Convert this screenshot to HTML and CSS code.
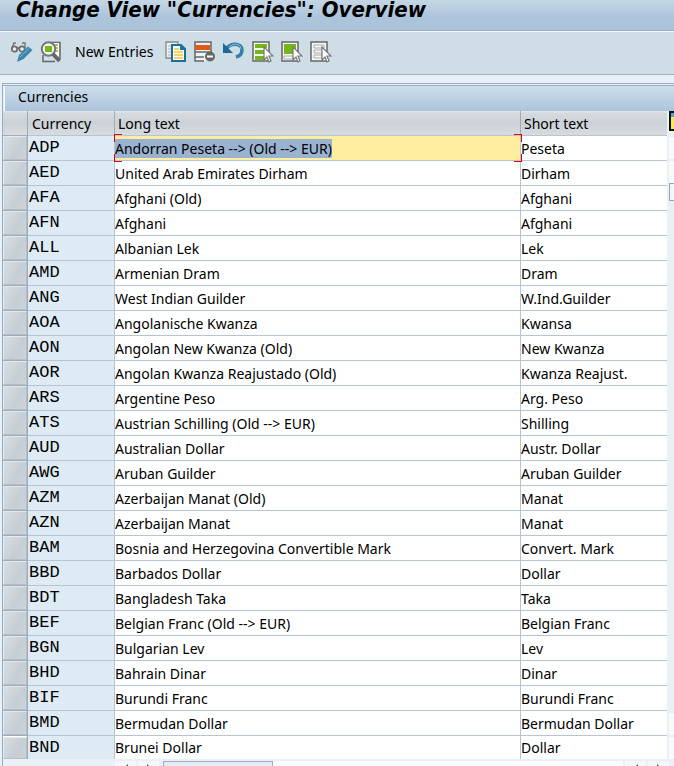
FILE: index.html
```html
<!DOCTYPE html>
<html lang="en">
	<head>
		<meta charset="utf-8">
		<title>Change View "Currencies": Overview</title>
		<link rel="stylesheet" href="styles.css">
	</head>
	<body>
		<header class="titlebar">
			<h1>Change View "Currencies": Overview</h1>
		</header>
		<nav class="toolbar">
			<button type="button" aria-label="Display / Change">
				<svg width="22" height="22" viewBox="0 0 22 22" fill="none">
					<path d="M1 7l2-5h2M14 7V2h-3" stroke="#777" stroke-width="1.4"/>
					<circle cx="3.500" cy="8" r="2.700" fill="#e6edf2" stroke="#6b6b6b" stroke-width="1.700"/>
					<circle cx="11" cy="8" r="2.700" fill="#e6edf2" stroke="#6b6b6b" stroke-width="1.700"/>
					<path d="M6 7h3" stroke="#6b6b6b" stroke-width="1.700"/>
					<path d="M6 21l2-7 9-8.500 4.500 3.500-9 9z" fill="#3a85ae"/>
					<path d="M9 16l9-8.500" stroke="#7fb5d3"/>
				</svg>
			</button>
			<button type="button" aria-label="Details">
				<svg width="22" height="22" viewBox="0 0 22 22" fill="none">
					<path d="M10 1.500h10V18M3 14v6.500h12" stroke="#666" stroke-width="1.500"/>
					<path d="M13 2h6v13h-6z" fill="#fff"/>
					<path d="M14 4h4M14 7h4M14 10h4" stroke="#75b71b" stroke-width="1.500"/>
					<circle cx="8.500" cy="8" r="6.700" fill="#f4f8f6" stroke="#777" stroke-width="2"/>
					<path d="M5 5h7v6H5z" fill="#75b71b"/>
					<path d="M13 13l6.500 7" stroke="#666" stroke-width="4"/>
				</svg>
			</button>
			<button type="button" class="new-entries">New Entries</button>
			<button type="button" aria-label="Copy As...">
				<svg width="22" height="22" viewBox="0 0 22 22" fill="none">
					<path d="M6 17H1V1h12v3" fill="#eef2f4" stroke="#888" stroke-width="1.300"/>
					<path d="M3 5h4M3 8h4M3 11h4M3 14h4" stroke="#aaa"/>
					<path d="M7 4h9l4 4v12H7z" fill="#fff" stroke="#1870a0" stroke-width="2"/>
					<path d="M15 4v5h5z" fill="#1870a0"/>
					<path d="M9 8h5M9 11h9M9 14h9M9 17h9" stroke="#f5c32c" stroke-width="1.500"/>
				</svg>
			</button>
			<button type="button" aria-label="Delete">
				<svg width="22" height="22" viewBox="0 0 22 22" fill="none">
					<path d="M1 1h16v19H1z" fill="#eff3f5"/>
					<path d="M17 13V1H1v19h9M1 11h16M1 16h9" stroke="#666" stroke-width="1.500"/>
					<path d="M1 4h15v5H1z" fill="#df5a16"/>
					<circle cx="16" cy="15.500" r="5" fill="#666"/>
					<path d="M13 15.500h6" stroke="#fff" stroke-width="2"/>
				</svg>
			</button>
			<button type="button" aria-label="Undo Change">
				<svg width="22" height="22" viewBox="0 0 22 22" fill="none">
					<path d="M3 8c5-7 16-6 16 1 0 4-2 6-6 7" stroke="#347fa9" stroke-width="3.500"/>
					<path d="M6 6c4-4 12-4 12 2" stroke="#8dbad3"/>
					<path d="M0 2v10h10l-3-3-4-4z" fill="#1d6995"/>
				</svg>
			</button>
			<button type="button" aria-label="Select All">
				<svg width="22" height="22" viewBox="0 0 22 22" fill="none">
					<path d="M1 1h16v19H1z" fill="#f5f8f8" stroke="#666" stroke-width="1.500"/>
					<path d="M3 3h12v4H3zM3 9h10v4H3zM3 15h9v4H3z" fill="#75b71b"/>
					<path d="M12 6v13l3-3 2 5 2-1-2-5h4z" fill="#fff" stroke="#777" stroke-width="1.200"/>
				</svg>
			</button>
			<button type="button" aria-label="Select Block">
				<svg width="22" height="22" viewBox="0 0 22 22" fill="none">
					<path d="M1 1h16v19H1z" fill="#f5f8f8" stroke="#666" stroke-width="1.500"/>
					<path d="M3 3h12v10H3z" fill="#75b71b"/>
					<path d="M3 15h9v3H3z" stroke="#aaa"/>
					<path d="M12 6v13l3-3 2 5 2-1-2-5h4z" fill="#fff" stroke="#777" stroke-width="1.200"/>
				</svg>
			</button>
			<button type="button" aria-label="Deselect All">
				<svg width="22" height="22" viewBox="0 0 22 22" fill="none">
					<path d="M1 1h16v19H1z" fill="#f5f8f8" stroke="#666" stroke-width="1.500"/>
					<path d="M4 4h10v3H4zM4 9h8v3H4zM4 14h8v3H4z" stroke="#aaa"/>
					<path d="M12 6v13l3-3 2 5 2-1-2-5h4z" fill="#fff" stroke="#777" stroke-width="1.200"/>
				</svg>
			</button>
		</nav>
		<main class="panel">
			<h2>Currencies</h2>
			<div class="grid">
				<table>
					<thead>
						<tr><th class="sel"></th><th class="code">Currency</th><th id="long">Long text</th><th class="short" id="short">Short text</th></tr>
					</thead>
					<tbody>
						<tr><td><button type="button" aria-label="Select ADP"></button></td><td>ADP</td><td class="active"><input aria-labelledby="long" value="Andorran Peseta --&gt; (Old --&gt; EUR)"></td><td><input aria-labelledby="short" value="Peseta"></td></tr>
						<tr><td><button type="button" aria-label="Select AED"></button></td><td>AED</td><td><input aria-labelledby="long" value="United Arab Emirates Dirham"></td><td><input aria-labelledby="short" value="Dirham"></td></tr>
						<tr><td><button type="button" aria-label="Select AFA"></button></td><td>AFA</td><td><input aria-labelledby="long" value="Afghani (Old)"></td><td><input aria-labelledby="short" value="Afghani"></td></tr>
						<tr><td><button type="button" aria-label="Select AFN"></button></td><td>AFN</td><td><input aria-labelledby="long" value="Afghani"></td><td><input aria-labelledby="short" value="Afghani"></td></tr>
						<tr><td><button type="button" aria-label="Select ALL"></button></td><td>ALL</td><td><input aria-labelledby="long" value="Albanian Lek"></td><td><input aria-labelledby="short" value="Lek"></td></tr>
						<tr><td><button type="button" aria-label="Select AMD"></button></td><td>AMD</td><td><input aria-labelledby="long" value="Armenian Dram"></td><td><input aria-labelledby="short" value="Dram"></td></tr>
						<tr><td><button type="button" aria-label="Select ANG"></button></td><td>ANG</td><td><input aria-labelledby="long" value="West Indian Guilder"></td><td><input aria-labelledby="short" value="W.Ind.Guilder"></td></tr>
						<tr><td><button type="button" aria-label="Select AOA"></button></td><td>AOA</td><td><input aria-labelledby="long" value="Angolanische Kwanza"></td><td><input aria-labelledby="short" value="Kwansa"></td></tr>
						<tr><td><button type="button" aria-label="Select AON"></button></td><td>AON</td><td><input aria-labelledby="long" value="Angolan New Kwanza (Old)"></td><td><input aria-labelledby="short" value="New Kwanza"></td></tr>
						<tr><td><button type="button" aria-label="Select AOR"></button></td><td>AOR</td><td><input aria-labelledby="long" value="Angolan Kwanza Reajustado (Old)"></td><td><input aria-labelledby="short" value="Kwanza Reajust."></td></tr>
						<tr><td><button type="button" aria-label="Select ARS"></button></td><td>ARS</td><td><input aria-labelledby="long" value="Argentine Peso"></td><td><input aria-labelledby="short" value="Arg. Peso"></td></tr>
						<tr><td><button type="button" aria-label="Select ATS"></button></td><td>ATS</td><td><input aria-labelledby="long" value="Austrian Schilling (Old --&gt; EUR)"></td><td><input aria-labelledby="short" value="Shilling"></td></tr>
						<tr><td><button type="button" aria-label="Select AUD"></button></td><td>AUD</td><td><input aria-labelledby="long" value="Australian Dollar"></td><td><input aria-labelledby="short" value="Austr. Dollar"></td></tr>
						<tr><td><button type="button" aria-label="Select AWG"></button></td><td>AWG</td><td><input aria-labelledby="long" value="Aruban Guilder"></td><td><input aria-labelledby="short" value="Aruban Guilder"></td></tr>
						<tr><td><button type="button" aria-label="Select AZM"></button></td><td>AZM</td><td><input aria-labelledby="long" value="Azerbaijan Manat (Old)"></td><td><input aria-labelledby="short" value="Manat"></td></tr>
						<tr><td><button type="button" aria-label="Select AZN"></button></td><td>AZN</td><td><input aria-labelledby="long" value="Azerbaijan Manat"></td><td><input aria-labelledby="short" value="Manat"></td></tr>
						<tr><td><button type="button" aria-label="Select BAM"></button></td><td>BAM</td><td><input aria-labelledby="long" value="Bosnia and Herzegovina Convertible Mark"></td><td><input aria-labelledby="short" value="Convert. Mark"></td></tr>
						<tr><td><button type="button" aria-label="Select BBD"></button></td><td>BBD</td><td><input aria-labelledby="long" value="Barbados Dollar"></td><td><input aria-labelledby="short" value="Dollar"></td></tr>
						<tr><td><button type="button" aria-label="Select BDT"></button></td><td>BDT</td><td><input aria-labelledby="long" value="Bangladesh Taka"></td><td><input aria-labelledby="short" value="Taka"></td></tr>
						<tr><td><button type="button" aria-label="Select BEF"></button></td><td>BEF</td><td><input aria-labelledby="long" value="Belgian Franc (Old --&gt; EUR)"></td><td><input aria-labelledby="short" value="Belgian Franc"></td></tr>
						<tr><td><button type="button" aria-label="Select BGN"></button></td><td>BGN</td><td><input aria-labelledby="long" value="Bulgarian Lev"></td><td><input aria-labelledby="short" value="Lev"></td></tr>
						<tr><td><button type="button" aria-label="Select BHD"></button></td><td>BHD</td><td><input aria-labelledby="long" value="Bahrain Dinar"></td><td><input aria-labelledby="short" value="Dinar"></td></tr>
						<tr><td><button type="button" aria-label="Select BIF"></button></td><td>BIF</td><td><input aria-labelledby="long" value="Burundi Franc"></td><td><input aria-labelledby="short" value="Burundi Franc"></td></tr>
						<tr><td><button type="button" aria-label="Select BMD"></button></td><td>BMD</td><td><input aria-labelledby="long" value="Bermudan Dollar"></td><td><input aria-labelledby="short" value="Bermudan Dollar"></td></tr>
						<tr><td><button type="button" aria-label="Select BND"></button></td><td>BND</td><td><input aria-labelledby="long" value="Brunei Dollar"></td><td><input aria-labelledby="short" value="Dollar"></td></tr>
					</tbody>
				</table>
				<div class="vscroll">
					<button type="button" class="config" aria-label="Configuration">
						<svg width="20" height="20" viewBox="0 0 20 20"><path d="M1 1h18v18H1z" fill="#ffe94d" stroke="#111" stroke-width="2"/><path d="M2 2h16v4H2z" fill="#4ca5d4"/></svg>
					</button>
					<button type="button" class="step" aria-label="Up"></button>
					<button type="button" class="step" aria-label="Down"></button>
					<div class="vthumb"></div>
					<button type="button" class="step last" aria-label="Page up"></button>
					<button type="button" class="step" aria-label="Page down"></button>
				</div>
			</div>
			<div class="hscroll">
				<button type="button" class="prev" aria-label="First column"></button>
				<button type="button" class="next" aria-label="Next column"></button>
				<div class="track"><div class="hthumb"></div></div>
				<button type="button" class="prev" aria-label="Left"></button>
				<button type="button" class="next" aria-label="Right"></button>
			</div>
		</main>
		<script>
document.querySelector('.active input').select();
		</script>
	</body>
</html>
```
FILE: styles.css
```css
* {
	box-sizing: border-box;
}
body {
	margin: 0;
	height: 100vh;
	overflow: hidden;
	background: #e9f0f6;
	color: #000;
	font: 14px/20px "Noto Sans", Tahoma, sans-serif;
}
button, input {
	font: inherit;
	color: inherit;
	border: 0;
	padding: 0;
	background: none;
}
.titlebar {
	height: 31px;
	background: linear-gradient(#c5d7e5, #abc3db 60%);
	border-bottom: 1px solid #a0b1c0;
	padding-left: 16px;
}
h1 {
	margin: 0;
	font: italic bold 22px/20px "DejaVu Sans Condensed", "DejaVu Sans", Tahoma, sans-serif;
}
.toolbar {
	display: flex;
	align-items: center;
	gap: 7px;
	height: 44px;
	padding: 0 11px 2px;
	background: #cfdde7;
	border-top: 1px solid #f3f8fb;
	border-bottom: 1px solid #a0b1c0;
}
.toolbar button {
	display: flex;
}
.toolbar .new-entries {
	margin: 0 5px 0 6px;
}
.panel {
	margin: 8px 0 0 2px;
	border-top: 3px double #93adc6;
	border-left: 1px solid #93adc6;
}
h2 {
	margin: 0 0 0 1px;
	height: 25px;
	padding-left: 13px;
	font-size: 14px;
	font-weight: normal;
	line-height: 22px;
	background: linear-gradient(#cddeea, #acc4dc);
	border-left: 1px solid #f3f8fb;
}
.grid {
	display: flex;
	gap: 2px;
	overflow: hidden;
}
table {
	flex: 1;
	table-layout: fixed;
	border-collapse: separate;
	border-spacing: 0;
	width: 100%;
}
th {
	height: 25px;
	padding: 2px 3px 0;
	text-align: left;
	font-weight: normal;
	background: linear-gradient(#e4e8eb, #d6dbdf 2px, #cbd1d6 50%, #d8dce0);
	border-right: 1px solid #9eacba;
	border-bottom: 1px solid #b7c4d1;
}
th:last-child {
	border-right: 0;
}
.sel {
	width: 25px;
	border-bottom-color: #9eacba;
}
.code {
	width: 87px;
	padding-left: 4px;
}
.short {
	width: 146px;
}
td {
	height: 25px;
	padding: 0;
	background: #fff;
	border-right: 1px solid #b7c4d1;
	border-bottom: 1px solid #b7c4d1;
}
td:last-child {
	border-right: 0;
}
td:first-child {
	border: 0;
	border-right: 1px solid #9eacba;
	border-bottom: 1px solid #9eacba;
}
td:first-child button {
	display: block;
	width: 24px;
	height: 24px;
	background: linear-gradient(120deg, #d8dee2, #c6ced5 60%, #ccd3d9);
	border: 1px solid #e4e9ed;
	border-right-color: #b4bfc9;
	border-bottom-color: #b4bfc9;
}
td:nth-child(2) {
	padding-left: 1px;
	background: #deebf5;
	font: 17px/20px "Liberation Mono", monospace;
}
td input {
	display: block;
	width: 100%;
	height: 24px;
	outline: 0;
}
tbody tr:last-child td {
	height: 23px;
	border-bottom: 0;
}
tbody tr:last-child input, tbody tr:last-child button {
	height: 22px;
}
td.active {
	position: relative;
	background: #ffeea0;
}
/* red corner marks of the focused cell */
.active::before, .active::after {
	--red: linear-gradient(#d00 0 0);
	content: "";
	position: absolute;
	top: -2px;
	bottom: -2px;
	width: 8px;
	pointer-events: none;
}
.active::before {
	left: -1px;
	background: var(--red) left top / 8px 1px, var(--red) left bottom / 8px 1px, var(--red) left top / 1px 8px, var(--red) left bottom / 1px 8px;
	background-repeat: no-repeat;
}
.active::after {
	right: -2px;
	background: var(--red) right top / 8px 1px, var(--red) right bottom / 8px 1px, var(--red) right top / 1px 8px, var(--red) right bottom / 1px 8px;
	background-repeat: no-repeat;
}
::selection {
	background: #9ab3d0;
	color: #000;
}
.vscroll {
	display: flex;
	flex-direction: column;
	flex: none;
	width: 5px;
	overflow: hidden;
}
.vscroll button {
	flex: none;
	width: 20px;
}
.config {
	height: 24px;
}
.step {
	height: 22px;
	margin-top: 2px;
	background: #f7f9fb;
}
.vthumb {
	flex: none;
	width: 20px;
	height: 18px;
	background: #f3f6f9;
	border: 1px solid #9aa8b6;
}
.last {
	margin-top: auto;
}
.hscroll {
	display: flex;
	gap: 2px;
	height: 20px;
	margin: 2px 5px 0 112px;
}
.hscroll button {
	display: flex;
	justify-content: center;
	padding-top: 3px;
	width: 21px;
	background: #f5f8fa;
}
.hscroll button::before {
	content: "";
	border: 4px solid transparent;
}
.hscroll .prev::before {
	border-left: 0;
	border-right-color: #555;
}
.hscroll .next::before {
	border-right: 0;
	border-left-color: #555;
}
.track {
	flex: 1;
	margin-left: 2px;
	background: #f8fafc;
}
.hthumb {
	width: 24%;
	height: 20px;
	background: #e3ecf4;
	border: 1px solid #a3afbb;
}
```
